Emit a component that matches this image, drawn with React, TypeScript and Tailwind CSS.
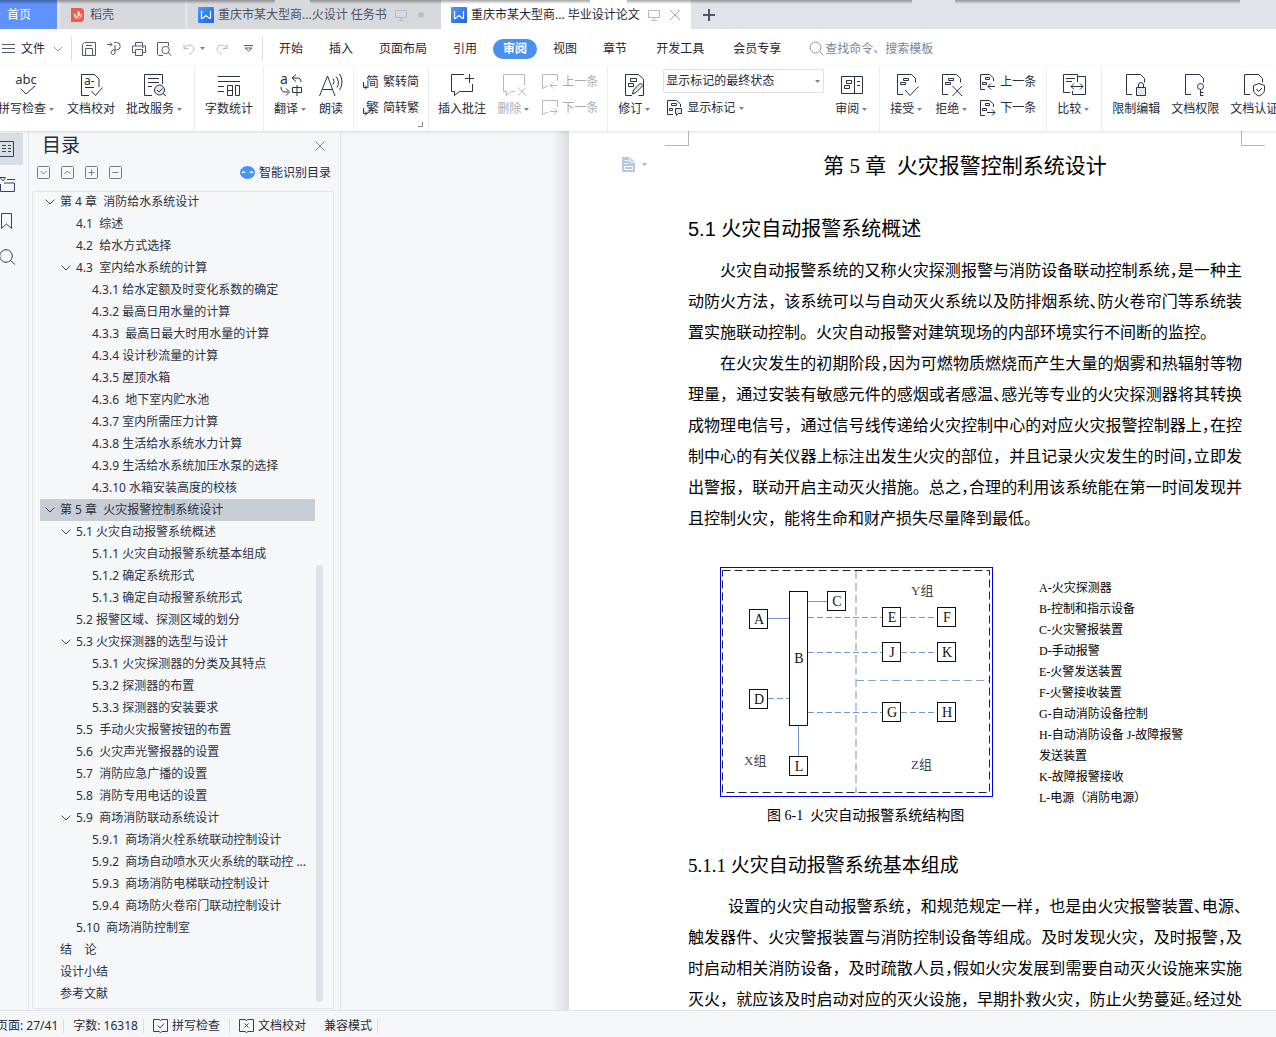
import React, { useState } from "react";

type IconProps = { className?: string };

const ink = "#2b3245";

/* ---------- small shared glyphs ---------- */

const Caret = ({ className = "text-[#7b839b]" }: IconProps) => (
  <svg width="5" height="3" viewBox="0 0 5 3" className={className} fill="currentColor">
    <path d="M0 0h5L2.5 3z" />
  </svg>
);

const Chevron = ({ className = "" }: IconProps) => (
  <svg width="10" height="6" viewBox="0 0 10 6" className={className} fill="none" stroke="currentColor">
    <path d="M0.7 0.7L5 5L9.3 0.7" />
  </svg>
);

const WriterLogo = () => (
  <svg width="16" height="16" viewBox="0 0 16 16" className="shrink-0">
    <defs>
      <linearGradient id="writer" x1="0" y1="0" x2="1" y2="1">
        <stop offset="0" stopColor="#4d9bf8" />
        <stop offset="1" stopColor="#1f63e0" />
      </linearGradient>
    </defs>
    <rect width="16" height="16" rx="1" fill="url(#writer)" />
    <path d="M3.500 4v7.500h1L8 8.500l3.500 3h1V4" fill="none" stroke="#fff" strokeWidth="1.200" />
  </svg>
);

const Screen = () => (
  <svg width="12" height="12" viewBox="0 0 12 12" fill="none" stroke="#b1b8cf">
    <path d="M.5 1.500h11v7H.5zM6 8.500v2.500M3 11.400h6" />
  </svg>
);

/* ---------- quick access icons ---------- */

const quick = {
  save: <path d="M1.500 14.500v-11l2-2h11v13zM4.500 14.500v-7h7v7M5 4.500h6" />,
  exportPdf: (
    <path d="M1 3.500h5M4 1.500l2 2l-2 2M8 1.500h2.500a3.500 3.500 0 0 1 0 7.500H6.500M9 4v8a2 2 0 1 1-2-2.500" />
  ),
  print: (
    <path d="M4.500 5v-3.500h7V5M4.500 11.500h-3v-6.500h13v6.500h-3M4.500 8.500h7v6h-7zM11 6.500h1.500" />
  ),
  preview: (
    <path d="M7 14.500H2.500l-1-1v-12h11V5M13.300 9a3.700 3.700 0 1 1-7.400 0a3.700 3.700 0 0 1 7.400 0zM12.200 11.700l3 3" />
  ),
};

const QuickButton = ({ label, children }: { label: string; children: React.ReactNode }) => (
  <button type="button" aria-label={label} className="flex size-4 items-center justify-center">
    <svg width="16" height="16" viewBox="0 0 16 16" fill="none" stroke="#555b68">
      {children}
    </svg>
  </button>
);

/* ---------- ribbon icons, 24px grid ---------- */

const Big = ({ children, color = ink }: { children: React.ReactNode; color?: string }) => (
  <svg width="24" height="24" viewBox="0 0 24 24" fill="none" stroke={color} className="overflow-visible">
    {children}
  </svg>
);

const DocShape = () => <path d="M8 21.500H2.500v-20h14l4 4v4" />;
const DocMarks = () => <path d="M8.500 5.500h5v2h-5zM5.500 9.500h5v2h-5z" />;

const SpellIcon = () => (
  <Big>
    <text x="11" y="11" fontSize="13" textAnchor="middle" fill={ink} stroke="none" fontFamily="Noto Sans">
      abc
    </text>
    <path d="M5.500 15.500l5.500 5.500l9-8" />
  </Big>
);

const ProofIcon = () => (
  <Big>
    <path d="M10 22.500H2.500v-21h13l4.500 4.500v8M6 14.500h9" />
    <text x="5" y="12" fontSize="12" fill={ink} stroke="none" fontFamily="Noto Sans">
      a-
    </text>
    <path d="M12.500 18l4 4.500l7-8" />
  </Big>
);

const ServiceIcon = () => (
  <Big>
    <path d="M9 22.500H1.500v-21h18V11M5 5.500h11M5 9.500h11M5 13.500h4" />
    <circle cx="16.500" cy="17" r="5" fill="#e4e6ea" />
    <path d="M14 17l2 2l3.500-3.500M20 20.500l3 2.500" />
  </Big>
);

const CountIcon = () => (
  <Big>
    <path d="M1 3.500h22M1 8.500h22M1 13.500h6M1 18.500h6M10.500 12.500h5v10h-5zM10.500 17.500h5M18.500 12.500h4v10h-4z" />
  </Big>
);

const TranslateIcon = () => (
  <Big>
    <text x="1" y="11" fontSize="14" fill={ink} stroke="none" fontFamily="Noto Sans">
      a
    </text>
    <path d="M17 1.500l-4 3.500l4 3.500M13 5h5.500c2 0 3.500 1 3.500 4M2 14c0 3 1.500 5 4 5h3M7 15.500l3.500 3.500l-3.500 3.500M13.500 14.500h9v5h-9zM18 12v11" />
  </Big>
);

const ReadIcon = () => (
  <Big>
    <path d="M0.500 23L8.500 3L16 23M3.500 16.500h10M14 5.500a5 5 0 0 1 0 6M17 3.500a9 9 0 0 1 1 11M20.500 1a14 14 0 0 1 0 16" />
  </Big>
);

const InsertNoteIcon = () => (
  <Big>
    <path d="M14 1.500H1.500v17H4.500V22.500l5-4h13V11" />
    <path d="M15 5.500h9M19.500 1v9" />
  </Big>
);

const DeleteNoteIcon = () => (
  <Big color="#b6b8be">
    <path d="M13 18.500H9.500l-5 4v-4H1.500v-17h21V12M16 14.500l8 8M24 14.500l-8 8" />
  </Big>
);

const ReviseIcon = () => (
  <Big>
    <path d="M9 22.500H2.500v-21h13l5 4.500v16.500h-5M7.500 5.500h6v3h-6zM5.500 10.500h5v3h-5z" />
    <path d="M9.500 21l1-4l7-7l2.500 2.500l-7 7z" fill="#e4e6ea" />
  </Big>
);

const PaneIcon = () => (
  <Big>
    <path d="M1.500 3.500h21v17h-21zM14.500 3.500v17M6.500 7.500h5v3h-5zM4.500 12.500h5v3h-5zM17 8.500h3M17 12.500h3" />
  </Big>
);

const AcceptIcon = () => (
  <Big>
    <DocShape />
    <DocMarks />
    <path d="M10 17l5 5.500l8.500-9" />
  </Big>
);

const RejectIcon = () => (
  <Big>
    <DocShape />
    <DocMarks />
    <path d="M12.500 13l9.500 10M22 13l-9.500 10" />
  </Big>
);

const CompareIcon = () => (
  <Big>
    <path d="M8 19.500H1.500v-18h14V9M4 5.500h9M4 8.500h6M15.500 3.500h8v18h-13V18M9 13.500h12M12 10.500l-3 3l3 3M18 10.500l3 3l-3 3" />
  </Big>
);

const LockIcon = () => (
  <Big>
    <DocShape />
    <path d="M12.500 14.500h9v8h-9z" fill="#e4e6ea" />
    <path d="M14.500 14V12a2.500 2.500 0 0 1 5 0v2" />
  </Big>
);

const KeyIcon = () => (
  <Big>
    <DocShape />
    <circle cx="17.500" cy="13.500" r="3" />
    <path d="M17.500 16.500v6.500M17.500 19.500h3M17.500 22.500h3" />
  </Big>
);

const ShieldIcon = () => (
  <Big>
    <DocShape />
    <path d="M17 10.500l5.500 2v4.500c0 3-3 5-5.500 6c-2.500-1-5.500-3-5.500-6v-4.500z" />
    <path d="M14.500 16l2 2.500l3.500-3.500" />
  </Big>
);

/* ---------- ribbon icons, 16px grid ---------- */

const Small = ({ children, color = ink }: { children: React.ReactNode; color?: string }) => (
  <svg width="16" height="16" viewBox="0 0 16 16" fill="none" stroke={color} className="shrink-0 overflow-visible">
    {children}
  </svg>
);

const HanIcon = ({ char }: { char: string }) => (
  <Small>
    <text x="3" y="12" fontSize="13" fill={ink} stroke="none" fontFamily="Noto Sans CJK SC">
      {char}
    </text>
    <path d="M0.500 8v5.500h3.500M2 11.500l2 2l-2 2" />
  </Small>
);

const NoteStep = ({ next }: { next?: boolean }) => (
  <Small color="#b6b8be">
    <path d="M6 12.500H4.500l-4 2V.5h15V7" />
    {next ? <path d="M8 11.500h7M12 8.500l3 3l-3 3" /> : <path d="M8 11.500h7M11 8.500l-3 3l3 3" />}
  </Small>
);

const DocStep = ({ next }: { next?: boolean }) => (
  <Small>
    <path d="M5 15.500H0.500v-15h9l4 3.500v3M5.500 3.500h4v2h-4zM2.500 8.500h4v2h-4z" />
    {next ? <path d="M7 12.500h8M12 9.500l3 3l-3 3" /> : <path d="M8 12.500h7M11 9.500l-3 3l3 3" />}
  </Small>
);

const ShowMarksIcon = () => (
  <Small>
    <path d="M6 14.500H0.500v-14h9l4 3.500v3M4.500 3.500h5v2h-5zM2.500 8.500h3v2h-3z" />
    <path d="M8.500 8.500h6v5h-3l-2 2v-2h-1z" fill="#e4e6ea" />
  </Small>
);

/* ---------- ribbon building blocks ---------- */

type ToolProps = { icon: React.ReactNode; label: string; menu?: boolean; disabled?: boolean };

const Tool = ({ icon, label, menu, disabled }: ToolProps) => (
  <button
    type="button"
    disabled={disabled}
    className={`flex shrink-0 flex-col items-center gap-1 pt-[6px] ${disabled ? "text-[#a9abb2]" : "text-[#252b3a]"}`}
  >
    {icon}
    <span className="flex items-center gap-[3px] leading-4">
      {label}
      {menu && <Caret className="mr-[2px] text-[#7b839b]" />}
    </span>
  </button>
);

const SmallTool = ({ icon, label, menu, disabled }: ToolProps) => (
  <button
    type="button"
    disabled={disabled}
    className={`flex h-5 items-center gap-1 ${disabled ? "text-[#a9abb2]" : "text-[#252b3a]"}`}
  >
    {icon}
    {label}
    {menu && <Caret />}
  </button>
);

type GroupProps = { children: React.ReactNode; last?: boolean; tight?: boolean };

const Group = ({ children, last, tight }: GroupProps) => (
  <div
    className={`relative flex shrink-0 gap-[11px] ${tight ? "px-[9px]" : "px-[10px]"} ${last ? "" : "border-r border-[#ebecef]"}`}
  >
    {children}
  </div>
);

const Stack = ({ children }: { children: React.ReactNode }) => (
  <div className="flex shrink-0 flex-col gap-[6px] pt-[5px]">{children}</div>
);

/* ---------- bars ---------- */

const TabBar = () => (
  <header className="relative flex h-[29px] shrink-0 overflow-hidden bg-[#e2e3e8]">
    <button type="button" className="w-[57px] shrink-0 bg-[#5f92fb] pl-[7px] text-left text-white">
      首页
    </button>
    <button
      type="button"
      className="ml-[3px] flex w-[125px] shrink-0 items-center gap-[6px] bg-[#d8d9dd] pl-[11px] text-[#4a5266]"
    >
      <svg width="13" height="14" viewBox="0 0 13 14">
        <path d="M0 0h9a4 4 0 0 1 4 4v6a4 4 0 0 1-4 4H0z" fill="#ee5a4c" />
        <path d="M7.500 2.500c-2 2.500-.5 5-1 8.500c3-.5 4.500-4.500 1-8.500zM3 5c-.5 3 .5 5 2.800 6C6 8.500 5 6.500 3 5zM11 6c-.2 3-1.500 4.500-4 5c0-2.500 1.500-4 4-5z" fill="#fff" opacity=".85" />
      </svg>
      稻壳
    </button>
    <button
      type="button"
      className="ml-[3px] flex w-[253px] shrink-0 items-center gap-1 bg-[#d8d9dd] pl-[10px] text-[#4a5266]"
    >
      <WriterLogo />
      <span>重庆市某大型商...火设计 任务书</span>
      <span className="ml-1 flex items-center gap-[11px]">
        <Screen />
        <span className="size-[6px] rounded-full bg-[#b9c0d4]" />
      </span>
    </button>
    <div className="flex w-[250px] shrink-0 items-center gap-1 bg-white pl-[10px] text-[#1f2533]">
      <WriterLogo />
      <span>重庆市某大型商... 毕业设计论文</span>
      <span className="ml-1 flex items-center gap-[9px]">
        <Screen />
        <button type="button" aria-label="关闭">
          <svg width="12" height="12" viewBox="0 0 12 12" fill="none" stroke="#98a1bd">
            <path d="M1 1l10 10M11 1L1 11" />
          </svg>
        </button>
      </span>
    </div>
    <button type="button" aria-label="新建" className="ml-3 flex items-center">
      <svg width="12" height="12" viewBox="0 0 12 12" stroke="#4b5570" strokeWidth="2">
        <path d="M6 0v12M0 6h12" />
      </svg>
    </button>
    {/* shadow cast by the window above */}
    <div className="pointer-events-none absolute inset-x-0 top-0 flex h-1">
      <i className="w-[275px] bg-linear-to-b from-black/35 to-transparent" />
      <i className="w-[35px]" />
      <i className="w-[280px] bg-linear-to-b from-black/35 to-transparent" />
      <i className="w-[37px]" />
      <i className="w-[285px] bg-linear-to-b from-black/35 to-transparent" />
      <i className="w-[43px]" />
      <i className="w-[285px] bg-linear-to-b from-black/35 to-transparent" />
    </div>
  </header>
);

const menus = ["开始", "插入", "页面布局", "引用", "审阅", "视图", "章节"];
const extraMenus = ["开发工具", "会员专享"];

const MenuBar = () => {
  const [active, setActive] = useState("审阅");

  const item = (name: string) => (
    <button
      key={name}
      type="button"
      onClick={() => setActive(name)}
      className={`h-5 shrink-0 rounded-full px-[10px] ${active === name ? "bg-[#4a90f0] font-bold text-white" : "text-[#1f2533]"}`}
    >
      {name}
    </button>
  );

  return (
    <div className="flex h-[38px] shrink-0 items-center overflow-hidden bg-white pt-px">
      <button type="button" className="flex shrink-0 items-center pl-[2px] text-[#1f2533]">
        <svg width="13" height="11" viewBox="0 0 13 11" stroke="#555b68" className="mr-[6px]">
          <path d="M0 1.500h13M0 5.500h13M0 9.500h13" />
        </svg>
        文件
        <Chevron className="ml-2 text-[#8f96a8]" />
      </button>
      <div className="ml-2 h-6 w-px shrink-0 bg-[#dcdee3]" />
      <div className="flex shrink-0 items-center gap-[9px] px-[9px]">
        <QuickButton label="保存">{quick.save}</QuickButton>
        <QuickButton label="输出为PDF">{quick.exportPdf}</QuickButton>
        <QuickButton label="打印">{quick.print}</QuickButton>
        <QuickButton label="打印预览">{quick.preview}</QuickButton>
        <button type="button" aria-label="撤销" className="flex items-center gap-[5px] pl-[2px]">
          <svg width="12" height="12" viewBox="0 0 12 12" fill="none" stroke="#b6b8be">
            <path d="M1 1v4.500h4.500M1 5.500C3 2 8 1 10 3.500c2.500 3-.5 6-4 8" />
          </svg>
          <Caret />
        </button>
        <button type="button" aria-label="恢复" className="flex items-center pl-[2px]">
          <svg width="12" height="12" viewBox="0 0 12 12" fill="none" stroke="#b6b8be">
            <path d="M11 1v4.500H6.500M11 5.500C9 2 4 1 2 3.500c-2.500 3 .5 6 4 8" />
          </svg>
        </button>
        <button type="button" aria-label="更多" className="pl-[7px]">
          <svg width="9" height="7" viewBox="0 0 9 7" fill="none" stroke="#555b68">
            <path d="M0 .5h9M1 3l3.500 3L8 3z" />
          </svg>
        </button>
      </div>
      <div className="h-6 w-px shrink-0 bg-[#dcdee3]" />
      <nav className="flex items-center gap-[6px] pl-[6px]">{menus.map(item)}</nav>
      <nav className="flex items-center gap-[9px] pl-[9px]">{extraMenus.map(item)}</nav>
      <label className="flex shrink-0 items-center gap-px pl-[18px]">
        <svg width="15" height="15" viewBox="0 0 15 15" fill="none" stroke="#8e96ab">
          <circle cx="6.500" cy="6.500" r="5.500" />
          <path d="M10.500 10.500l4 4" />
        </svg>
        <input
          aria-label="搜索"
          placeholder="查找命令、搜索模板"
          className="w-40 bg-transparent outline-none placeholder:text-[#7b8499]"
        />
      </label>
    </div>
  );
};

const Ribbon = () => (
  <div className="z-10 flex h-16 shrink-0 overflow-hidden bg-white shadow-[0_1px_3px_rgba(0,0,0,0.12)]">
    <div className="-ml-3 flex shrink-0">
      <Group>
        <Tool icon={<SpellIcon />} label="拼写检查" menu />
        <Tool icon={<ProofIcon />} label="文档校对" />
        <Tool icon={<ServiceIcon />} label="批改服务" menu />
      </Group>
    </div>
    <Group>
      <Tool icon={<CountIcon />} label="字数统计" />
    </Group>
    <Group>
      <Tool icon={<TranslateIcon />} label="翻译" menu />
      <Tool icon={<ReadIcon />} label="朗读" />
    </Group>
    <Group tight>
      <Stack>
        <SmallTool icon={<HanIcon char="简" />} label="繁转简" />
        <SmallTool icon={<HanIcon char="繁" />} label="简转繁" />
      </Stack>
      <svg width="5" height="5" viewBox="0 0 5 5" fill="none" stroke="#7b839b" className="absolute right-[5px] bottom-1">
        <path d="M0 4.500h4.500V0" />
      </svg>
    </Group>
    <Group tight>
      <Tool icon={<InsertNoteIcon />} label="插入批注" />
      <Tool icon={<DeleteNoteIcon />} label="删除" menu disabled />
      <Stack>
        <SmallTool icon={<NoteStep />} label="上一条" disabled />
        <SmallTool icon={<NoteStep next />} label="下一条" disabled />
      </Stack>
    </Group>
    <Group>
      <Tool icon={<ReviseIcon />} label="修订" menu />
      <div className="flex flex-col items-start gap-[5px] pt-[2px]">
        <div className="relative">
          <select
            aria-label="显示状态"
            className="h-6 w-[161px] appearance-none rounded-[2px] border border-[#dfe1e6] bg-white pl-[2px] text-[#1f2533]"
          >
            <option>显示标记的最终状态</option>
            <option>最终状态</option>
            <option>显示标记的原始状态</option>
            <option>原始状态</option>
          </select>
          <Caret className="pointer-events-none absolute top-[11px] right-1 text-[#7b839b]" />
        </div>
        <div className="pl-1">
          <SmallTool icon={<ShowMarksIcon />} label="显示标记" menu />
        </div>
      </div>
      <Tool icon={<PaneIcon />} label="审阅" menu />
    </Group>
    <Group>
      <Tool icon={<AcceptIcon />} label="接受" menu />
      <Tool icon={<RejectIcon />} label="拒绝" menu />
      <Stack>
        <SmallTool icon={<DocStep />} label="上一条" />
        <SmallTool icon={<DocStep next />} label="下一条" />
      </Stack>
    </Group>
    <Group>
      <Tool icon={<CompareIcon />} label="比较" menu />
    </Group>
    <Group last>
      <Tool icon={<LockIcon />} label="限制编辑" />
      <Tool icon={<KeyIcon />} label="文档权限" />
      <Tool icon={<ShieldIcon />} label="文档认证" />
    </Group>
  </div>
);

/* ---------- left side ---------- */

const Rail = () => (
  <nav className="flex w-[29px] shrink-0 flex-col gap-1 border-r border-[#e1e4ea] pt-[2px]">
    <button type="button" aria-label="目录" className="flex h-8 w-[23px] items-center rounded-r-[2px] bg-[#d9dde4]">
      <svg width="15" height="16" viewBox="0 0 15 16" fill="none" stroke="#37405c">
        <path d="M-1 .5h14.500v15H-1M2 4.500h4M2 7.500h4M2 10.500h4M8 4.500h3M8 7.500h3M8 10.500h3" />
      </svg>
    </button>
    <button type="button" aria-label="章节" className="flex h-8 items-center">
      <svg width="16" height="16" viewBox="0 0 16 16" fill="none" stroke="#37405c">
        <path d="M0 .5h5.500L3 4zM7 2.500h8M0.500 7v7.500h14v-8.500H4" />
      </svg>
    </button>
    <button type="button" aria-label="书签" className="flex h-8 items-center">
      <svg width="14" height="16" viewBox="0 0 14 16" fill="none" stroke="#37405c">
        <path d="M1.500 .5h10v15l-5-4.500l-5 4.500z" />
      </svg>
    </button>
    <button type="button" aria-label="查找" className="flex h-8 items-center">
      <svg width="16" height="16" viewBox="0 0 16 16" fill="none" stroke="#37405c">
        <circle cx="6" cy="7" r="6.300" />
        <path d="M10.500 11.500l4.500 4" />
      </svg>
    </button>
  </nav>
);

type Entry = { text: string; level: 1 | 2 | 3; open?: boolean };

const outline: Entry[] = [
  { text: "第 4 章  消防给水系统设计", level: 1, open: true },
  { text: "4.1  综述", level: 2 },
  { text: "4.2  给水方式选择", level: 2 },
  { text: "4.3  室内给水系统的计算", level: 2, open: true },
  { text: "4.3.1 给水定额及时变化系数的确定", level: 3 },
  { text: "4.3.2 最高日用水量的计算", level: 3 },
  { text: "4.3.3  最高日最大时用水量的计算", level: 3 },
  { text: "4.3.4 设计秒流量的计算", level: 3 },
  { text: "4.3.5 屋顶水箱", level: 3 },
  { text: "4.3.6  地下室内贮水池", level: 3 },
  { text: "4.3.7 室内所需压力计算", level: 3 },
  { text: "4.3.8 生活给水系统水力计算", level: 3 },
  { text: "4.3.9 生活给水系统加压水泵的选择", level: 3 },
  { text: "4.3.10 水箱安装高度的校核", level: 3 },
  { text: "第 5 章  火灾报警控制系统设计", level: 1, open: true },
  { text: "5.1 火灾自动报警系统概述", level: 2, open: true },
  { text: "5.1.1 火灾自动报警系统基本组成", level: 3 },
  { text: "5.1.2 确定系统形式", level: 3 },
  { text: "5.1.3 确定自动报警系统形式", level: 3 },
  { text: "5.2 报警区域、探测区域的划分", level: 2 },
  { text: "5.3 火灾探测器的选型与设计", level: 2, open: true },
  { text: "5.3.1 火灾探测器的分类及其特点", level: 3 },
  { text: "5.3.2 探测器的布置", level: 3 },
  { text: "5.3.3 探测器的安装要求", level: 3 },
  { text: "5.5  手动火灾报警按钮的布置", level: 2 },
  { text: "5.6  火灾声光警报器的设置", level: 2 },
  { text: "5.7  消防应急广播的设置", level: 2 },
  { text: "5.8  消防专用电话的设置", level: 2 },
  { text: "5.9  商场消防联动系统设计", level: 2, open: true },
  { text: "5.9.1  商场消火栓系统联动控制设计", level: 3 },
  { text: "5.9.2  商场自动喷水灭火系统的联动控 ...", level: 3 },
  { text: "5.9.3  商场消防电梯联动控制设计", level: 3 },
  { text: "5.9.4  商场防火卷帘门联动控制设计", level: 3 },
  { text: "5.10  商场消防控制室", level: 2 },
  { text: "结    论", level: 1 },
  { text: "设计小结", level: 1 },
  { text: "参考文献", level: 1 },
];

const indent = { 1: "pl-[5px]", 2: "pl-[21px]", 3: "pl-[37px]" };

const treeTools = [
  { label: "展开", d: "M3.500 5l3 3l3-3" },
  { label: "收起", d: "M3.500 8l3-3l3 3" },
  { label: "增加级别", d: "M3.500 6.500h6M6.500 3.500v6" },
  { label: "降低级别", d: "M3.500 6.500h6" },
];

const OutlinePanel = () => {
  const [current, setCurrent] = useState(14);

  return (
    <aside className="flex w-[312px] shrink-0 flex-col border-r border-[#e1e4ea] pl-[3px] pr-[6px]">
      <div className="flex h-[30px] items-center justify-between pl-[10px] pr-[9px]">
        <h2 className="text-[19px] text-[#252b3a]">目录</h2>
        <button type="button" aria-label="关闭目录">
          <svg width="10" height="10" viewBox="0 0 10 10" fill="none" stroke="#7b84a3">
            <path d="M.5 .5l9 9M9.500 .5l-9 9" />
          </svg>
        </button>
      </div>
      <div className="flex h-[30px] items-center pb-[7px] pl-[5px] pr-[3px]">
        <div className="flex gap-[11px]">
          {treeTools.map((t) => (
            <button key={t.label} type="button" aria-label={t.label}>
              <svg width="13" height="13" viewBox="0 0 13 13" fill="none" stroke="#737987">
                <rect x=".5" y=".5" width="12" height="12" rx="1" />
                <path d={t.d} />
              </svg>
            </button>
          ))}
        </div>
        <button type="button" className="ml-auto flex items-center gap-1 text-[#252b3a]">
          <svg width="15" height="13" viewBox="0 0 15 13">
            <path d="M7.500 0C12 0 15 3 15 6.500S12 13 7.500 13S0 10 0 6.500S3 0 7.500 0z" fill="#4a94f5" />
            <path d="M2 7c1-1.500 2-1.500 3 0M10 7c1-1.500 2-1.500 3 0" fill="none" stroke="#fff" strokeWidth="1.200" />
          </svg>
          智能识别目录
        </button>
      </div>
      <div className="relative mb-px flex-1 overflow-hidden rounded-[2px] border border-[#e1e4ea] pl-[7px] pr-[18px]">
        <ul className="-mt-px">
          {outline.map((entry, i) => (
            <li key={entry.text}>
              <button
                type="button"
                onClick={() => setCurrent(i)}
                className={`flex h-[22px] w-full items-center gap-[5px] whitespace-pre text-[#2b3040] ${indent[entry.level]} ${i === current ? "bg-[#c8ced6]" : ""}`}
              >
                <span className="flex w-[10px] text-[#3c4458]">{entry.open && <Chevron />}</span>
                {entry.text}
              </button>
            </li>
          ))}
        </ul>
        <div className="absolute right-[10px] bottom-[6px] h-[437px] w-[7px] rounded-full bg-[#dfe2e6]" />
      </div>
    </aside>
  );
};

/* ---------- document ---------- */

const overview = [
  [
    "火灾自动报警系统的又称火灾探测报警与消防设备联动控制系统，是一种主",
    "动防火方法，该系统可以与自动灭火系统以及防排烟系统、防火卷帘门等系统装",
    "置实施联动控制。火灾自动报警对建筑现场的内部环境实行不间断的监控。",
  ],
  [
    "在火灾发生的初期阶段，因为可燃物质燃烧而产生大量的烟雾和热辐射等物",
    "理量，通过安装有敏感元件的感烟或者感温、感光等专业的火灾探测器将其转换",
    "成物理电信号，通过信号线传递给火灾控制中心的对应火灾报警控制器上，在控",
    "制中心的有关仪器上标注出发生火灾的部位，并且记录火灾发生的时间，立即发",
    "出警报，联动开启主动灭火措施。总之，合理的利用该系统能在第一时间发现并",
    "且控制火灾，能将生命和财产损失尽量降到最低。",
  ],
];

const composition = [
  "设置的火灾自动报警系统，和规范规定一样，也是由火灾报警装置、电源、",
  "触发器件、火灾警报装置与消防控制设备等组成。及时发现火灾，及时报警，及",
  "时启动相关消防设备，及时疏散人员，假如火灾发展到需要自动灭火设施来实施",
  "灭火，就应该及时启动对应的灭火设施，早期扑救火灾，防止火势蔓延。经过处",
];

const MEASURE = 554;
const EM = 16;

// sets just enough trailing punctuation at half width for the line to fit the measure
const fitLine = (line: string, room: number) => {
  const chars = Array.from(line);
  let spare = Math.ceil((chars.length * EM - room) / (EM / 2));
  const parts: React.ReactNode[] = [];
  let run = "";
  for (let i = chars.length - 1; i >= 0; i--) {
    if (spare > 0 && "，。、".includes(chars[i])) {
      parts.unshift(
        <span key={i} className="[font-feature-settings:'halt']">
          {chars[i]}
        </span>,
        run,
      );
      run = "";
      spare--;
    } else {
      run = chars[i] + run;
    }
  }
  parts.unshift(run);
  return parts;
};

type ParagraphProps = { lines: string[]; deep?: boolean; open?: boolean };

const Paragraph = ({ lines, deep, open }: ParagraphProps) => (
  <p className="text-base leading-[31px]">
    {lines.map((line, i) => {
      const full = open || i < lines.length - 1;
      const space = i > 0 ? 0 : deep ? 40 : 32;
      return (
        <span
          key={line}
          className={`block whitespace-nowrap ${i > 0 ? "" : deep ? "pl-10" : "pl-8"} ${full ? "[text-align-last:justify]" : ""}`}
        >
          {full ? fitLine(line, MEASURE - space) : line}
        </span>
      );
    })}
  </p>
);

const nodes = [
  { id: "A", x: 29.5, y: 42.5 },
  { id: "C", x: 107.5, y: 24.5 },
  { id: "D", x: 29.5, y: 122.5 },
  { id: "E", x: 162.5, y: 40.5 },
  { id: "F", x: 217.5, y: 40.5 },
  { id: "J", x: 162.5, y: 75.5 },
  { id: "K", x: 217.5, y: 75.5 },
  { id: "G", x: 162.5, y: 135.5 },
  { id: "H", x: 217.5, y: 135.5 },
  { id: "L", x: 69.5, y: 189.5 },
];

const SystemDiagram = () => (
  <svg width="273" height="230" viewBox="0 0 273 230" fill="none" className="font-[Liberation_Serif,Noto_Sans_CJK_SC,serif]">
    <rect x=".5" y=".5" width="272" height="229" stroke="#0000f0" />
    <rect x="2.500" y="3.500" width="267" height="222" stroke="#222" strokeDasharray="8 4" />
    <g stroke="#86a6d8" strokeWidth="1.200">
      <path d="M136 4v222M136 113.500h133" strokeDasharray="8 4" />
    </g>
    <g stroke="#6f96d2">
      <path d="M48 51.500h21M88 34.500h19M78.500 159v30" />
      <path d="M88 50.500h74M181 50.500h37M88 85.500h74M181 85.500h37M88 145.500h74M181 145.500h37M48 131.500h21" strokeDasharray="6 3" />
    </g>
    <rect x="69.500" y="24.500" width="18" height="134" stroke="#111" />
    <text x="79" y="95.500" fontSize="14" textAnchor="middle" fill="#111">
      B
    </text>
    {nodes.map((n) => (
      <g key={n.id}>
        <rect x={n.x} y={n.y} width="18" height="19" fill="#fff" stroke="#111" />
        <text x={n.x + 9.5} y={n.y + 14} fontSize="14" textAnchor="middle" fill="#111">
          {n.id}
        </text>
      </g>
    ))}
    <g fontSize="13" fill="#444">
      <text x="24" y="198">X组</text>
      <text x="191" y="28">Y组</text>
      <text x="191" y="202">Z组</text>
    </g>
  </svg>
);

const legend = [
  "A-火灾探测器",
  "B-控制和指示设备",
  "C-火灾警报装置",
  "D-手动报警",
  "E-火警发送装置",
  "F-火警接收装置",
  "G-自动消防设备控制",
  "H-自动消防设备 J-故障报警发送装置",
  "K-故障报警接收",
  "L-电源（消防电源）",
];

const DocumentArea = () => (
  <main className="flex min-w-0 flex-1 overflow-hidden bg-[#f5f6f8]">
    <div className="w-[212px] shrink-0" />
    <div className="w-4 shrink-0 bg-linear-to-r from-[#f5f6f8] to-[#d9dce1]" />
    <article className="relative w-[792px] shrink-0 bg-white px-[119px] font-[Liberation_Serif,Noto_Sans_CJK_SC,serif] text-black">
      {/* margin corners */}
      <div className="absolute top-0 left-24 h-[15px] w-6 border-r border-b border-[#b5b5b5]" />
      <div className="absolute top-0 right-24 h-[15px] w-6 border-b border-l border-[#b5b5b5]" />
      <button type="button" aria-label="段落布局" className="absolute top-[26px] left-[53px] flex items-center gap-[7px]">
        <svg width="13" height="15" viewBox="0 0 13 15">
          <path d="M0 0h8l5 5v10H0z" fill="#b4c8e8" />
          <path d="M8 0v5h5M2.500 3.500h4M2.500 6.500h4M2.500 9.500h8v3h-8z" fill="none" stroke="#fff" />
        </svg>
        <Caret className="text-[#a9abb2]" />
      </button>

      <h1 className="whitespace-pre pt-5 text-center text-[21px] leading-[30px]">第 5 章  火灾报警控制系统设计</h1>
      <h2 className="mt-[33px] font-[Liberation_Sans,Noto_Sans_CJK_SC,sans-serif] text-[20px] leading-[30px]">
        5.1 火灾自动报警系统概述
      </h2>
      <div className="pt-[11px]">
        {overview.map((lines) => (
          <Paragraph key={lines[0]} lines={lines} />
        ))}
      </div>

      <div className="mt-[33px] flex pl-8">
        <figure className="w-[273px] shrink-0">
          <SystemDiagram />
          <figcaption className="mt-[7px] whitespace-pre pl-[47px] text-sm leading-6">图 6-1  火灾自动报警系统结构图</figcaption>
        </figure>
        <ul className="ml-[46px] w-[152px] pt-[11px] text-xs leading-[21px]">
          {legend.map((item) => (
            <li key={item}>{item}</li>
          ))}
        </ul>
      </div>

      <h3 className="mt-[23px] text-[19px] leading-[30px]">5.1.1 火灾自动报警系统基本组成</h3>
      <div className="pt-[10px]">
        <Paragraph lines={composition} deep open />
      </div>
    </article>
  </main>
);

/* ---------- status bar ---------- */

const CheckBook = ({ d }: { d: string }) => (
  <svg width="15" height="14" viewBox="0 0 15 14" fill="none" stroke="#37405c">
    <path d="M6 .5H.5v12H6l1.500 1l1.500-1h5.500V.5H9L7.500 1.500z" />
    <path d={d} />
  </svg>
);

const Divider = () => <div className="h-[14px] w-px bg-[#d9dce2]" />;

const StatusBar = () => (
  <footer className="z-10 flex h-[27px] shrink-0 items-center overflow-hidden whitespace-nowrap border-t border-[#e1e4ea] bg-[#f5f6f8] text-[#252b3a]">
    <div className="-ml-[13px] flex items-center pt-[3px]">
      <span className="pl-[9px] pr-[5px]">页面: 27/41</span>
      <Divider />
      <span className="pl-[9px] pr-[5px]">字数: 16318</span>
      <Divider />
      <button type="button" className="flex items-center gap-1 px-[9px]">
        <CheckBook d="M4.500 6.500l2.500 2.500l4-4.500" />
        拼写检查
      </button>
      <Divider />
      <button type="button" className="flex items-center gap-1 px-[9px]">
        <CheckBook d="M5.500 4.500l4 4M9.500 4.500l-4 4" />
        文档校对
      </button>
      <span className="pl-[9px] pr-[5px]">兼容模式</span>
      <Divider />
    </div>
  </footer>
);

export default function App() {
  return (
    <div className="flex h-screen flex-col overflow-hidden bg-[#f6f7f9] font-[Noto_Sans,Noto_Sans_CJK_SC,sans-serif] text-xs">
      <TabBar />
      <MenuBar />
      <Ribbon />
      <div className="flex min-h-0 flex-1">
        <Rail />
        <OutlinePanel />
        <DocumentArea />
      </div>
      <StatusBar />
    </div>
  );
}
